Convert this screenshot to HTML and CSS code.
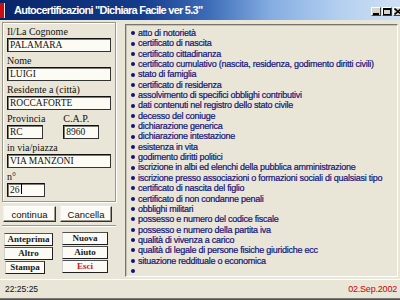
FILE: index.html
```html
<!DOCTYPE html>
<html>
<head>
<meta charset="utf-8">
<link rel="stylesheet" href="styles.css">
</head>
<body>
<div class="window">
  <div class="titlebar">
    <span class="app-icon"></span>
    <span class="title">Autocertificazioni "Dichiara Facile ver 5.3"</span>
    <div class="controls">
      <span class="ctl"><svg width="7" height="7" viewBox="0 0 7 7"><rect x="0" y="5" width="6" height="2" fill="#000"/></svg></span>
      <span class="ctl"><svg width="8" height="7" viewBox="0 0 8 7"><rect x="0.5" y="0.5" width="7" height="6" fill="none" stroke="#000"/><rect x="0" y="0" width="8" height="2" fill="#000"/></svg></span>
      <span class="ctl"><svg width="8" height="7" viewBox="0 0 8 7"><path d="M0.5 0.5 L7.5 6.5 M7.5 0.5 L0.5 6.5" stroke="#000" stroke-width="1.6"/></svg></span>
    </div>
  </div>
  <div class="main">
    <div class="left">
      <div class="form">
        <div class="lbl">Il/La Cognome</div>
        <div class="field">PALAMARA</div>
        <div class="lbl">Nome</div>
        <div class="field">LUIGI</div>
        <div class="lbl">Residente a (città)</div>
        <div class="field">ROCCAFORTE</div>
        <div class="pair">
          <div class="cell">
            <div class="lbl">Provincia</div>
            <div class="field short">RC</div>
          </div>
          <div class="cell">
            <div class="lbl">C.A.P.</div>
            <div class="field short">8960</div>
          </div>
        </div>
        <div class="lbl">in via/piazza</div>
        <div class="field">VIA MANZONI</div>
        <div class="lbl">n°</div>
        <div class="field num">26<span class="caret"></span></div>
      </div>
      <div class="actions">
        <button class="btn">continua</button>
        <button class="btn">Cancella</button>
      </div>
      <div class="tools">
        <div class="col col-a">
          <button class="tbtn">Anteprima</button>
          <button class="tbtn">Altro</button>
          <button class="tbtn narrow">Stampa</button>
        </div>
        <div class="col col-b">
          <button class="tbtn">Nuova</button>
          <button class="tbtn">Aiuto</button>
          <button class="tbtn exit">Esci</button>
        </div>
      </div>
    </div>
    <div class="list">
      <ul>
        <li>atto di notorietà</li>
        <li>certificato di nascita</li>
        <li>certificato cittadinanza</li>
        <li>certificato cumulativo (nascita, residenza, godimento diritti civili)</li>
        <li>stato di famiglia</li>
        <li>certificato di residenza</li>
        <li>assolvimento di specifici obblighi contributivi</li>
        <li>dati contenuti nel registro dello stato civile</li>
        <li>decesso del coniuge</li>
        <li>dichiarazione generica</li>
        <li>dichiarazione intestazione</li>
        <li>esistenza in vita</li>
        <li>godimento diritti politici</li>
        <li>iscrizione in albi ed elenchi della pubblica amministrazione</li>
        <li>iscrizione presso associazioni o formazioni sociali di qualsiasi tipo</li>
        <li>certificato di nascita del figlio</li>
        <li>certificato di non condanne penali</li>
        <li>obblighi militari</li>
        <li>possesso e numero del codice fiscale</li>
        <li>possesso e numero della partita iva</li>
        <li>qualità di vivenza a carico</li>
        <li>qualità di legale di persone fisiche giuridiche ecc</li>
        <li>situazione reddituale o economica</li>
        <li></li>
      </ul>
    </div>
  </div>
  <div class="status">
    <span class="time">22:25:25</span>
    <span class="date">02.Sep.2002</span>
  </div>
  <div class="bottom"></div>
</div>
</body>
</html>
```

FILE: styles.css
```css
* { box-sizing: border-box; }
html, body { margin: 0; padding: 0; }
body { width: 400px; height: 300px; overflow: hidden; background: #e9e6d8; }

.window { width: 400px; height: 300px; display: flex; flex-direction: column; background: #e9e6d8; }

.titlebar {
  height: 20px;
  display: flex;
  align-items: center;
  background: linear-gradient(to right, #082468 0%, #143c8a 35%, #3c6cb8 52%, #86aee2 68%, #b4d0f0 85%, #cfe0f4 100%);
}
.app-icon {
  width: 6px; height: 15px; margin-left: 0; margin-right: 8px;
  background: linear-gradient(to right, #c81010 0 4px, #f0e0e0 4px 5px, #600000 5px);
}
.title {
  font-family: "Liberation Sans", Arial, sans-serif;
  font-weight: bold;
  font-size: 11px;
  letter-spacing: -0.75px;
  color: #fff;
  white-space: nowrap;
}
.controls { margin-left: auto; display: flex; gap: 1px; margin-right: -3px; margin-top: 2px; }
.ctl {
  width: 10px; height: 9px;
  background: #d8d4ca;
  display: flex; align-items: center; justify-content: center;
  border: 1px solid; border-color: #fff #404040 #404040 #fff;
}
.ctl svg { display: block; }

.main { flex: 0 0 258px; display: flex; }

.left { width: 116px; padding-left: 2px; padding-top: 2px; display: flex; flex-direction: column; }

.form {
  width: 114px;
  border: 1px solid #9a988c;
  box-shadow: inset 1px 1px 0 #fff, 1px 1px 0 #fff;
  padding: 0 4px 4px 4px;
}
.lbl {
  height: 15px;
  font-family: "Liberation Serif", "Times New Roman", serif;
  font-size: 10px;
  line-height: 17px;
  color: #111;
  white-space: nowrap;
}
.field {
  height: 14px;
  width: 104px;
  background: #fdfcf4;
  border: 1px solid #111;
  border-right-color: #333;
  border-bottom-color: #333;
  box-shadow: inset 1px 1px 0 #7a7a7a;
  font-family: "Liberation Serif", "Times New Roman", serif;
  font-size: 9.5px;
  line-height: 13px;
  padding-left: 2px;
  color: #111;
  white-space: nowrap;
}
.field.short { width: 36px; }
.field.num { width: 38px; }
.caret { display: inline-block; width: 1px; height: 10px; background: #000; vertical-align: -1px; margin-left: 1px; }
.pair { display: flex; gap: 18px; }
.cell { display: flex; flex-direction: column; }

.actions { display: flex; gap: 4px; margin-top: 4px; padding-left: 1px; }
.btn {
  height: 16px;
  width: 53px;
  padding: 0;
  background: #fbfaf4;
  border: 1px solid; border-color: #fff #303030 #303030 #f0f0f0;
  box-shadow: inset -1px -1px 0 #9a9890;
  font-family: "Liberation Sans", Arial, sans-serif;
  font-size: 9.5px;
  color: #111;
}
.actions .btn + .btn { width: 52px; }

.tools {
  margin-top: 3px;
  width: 114px;
  height: 51px;
  border-top: 1px solid #9a988c;
  box-shadow: inset 0 1px 0 #fff;
  display: flex;
  gap: 9px;
  padding: 7px 0 0 2px;
}
.col { display: flex; flex-direction: column; gap: 1px; }
.col-b { margin-top: -1px; }
.tbtn {
  height: 13px;
  width: 49px;
  padding: 0;
  background: #fbfaf4;
  border: 1px solid; border-color: #505050 #202020 #202020 #d0d0d0;
  font-family: "Liberation Serif", "Times New Roman", serif;
  font-weight: bold;
  font-size: 9px;
  line-height: 11px;
  color: #1a1a1a;
}
.col-b .tbtn { width: 46px; }
.tbtn.narrow { width: 40px; margin-left: 1px; }
.tbtn.exit { color: #d01818; }

.list {
  flex: 1;
  margin: 4px 2px 2px 9px;
  border: 1px solid; border-color: #77756b #fff #fff #77756b;
  box-shadow: inset 1px 1px 0 #c4c1b4;
  background: #e9e6d8;
  overflow: hidden;
}
.list ul { list-style: none; margin: 0; padding: 3px 0 0 5px; }
.list li {
  height: 10.35px;
  line-height: 10.35px;
  font-family: "Liberation Sans", Arial, sans-serif;
  font-size: 9px;
  letter-spacing: -0.25px;
  color: #12127a;
  -webkit-text-stroke: 0.2px #12127a;
  white-space: nowrap;
  display: flex; align-items: center;
}
.list li::before {
  content: "";
  width: 4px; height: 4px; border-radius: 50%;
  background: #12127a;
  margin-right: 3px;
  flex: 0 0 4px;
}

.status {
  flex: 0 0 19px;
  display: flex; align-items: center; justify-content: space-between;
  padding: 0 3px 0 5px;
  border-top: 1px solid #fff;
  font-family: "Liberation Sans", Arial, sans-serif;
}
.time { font-size: 8.5px; color: #111; }
.date { font-size: 9px; color: #c80000; letter-spacing: -0.2px; }
.bottom { flex: 1; background: linear-gradient(#8a8880, #404040); }
```
